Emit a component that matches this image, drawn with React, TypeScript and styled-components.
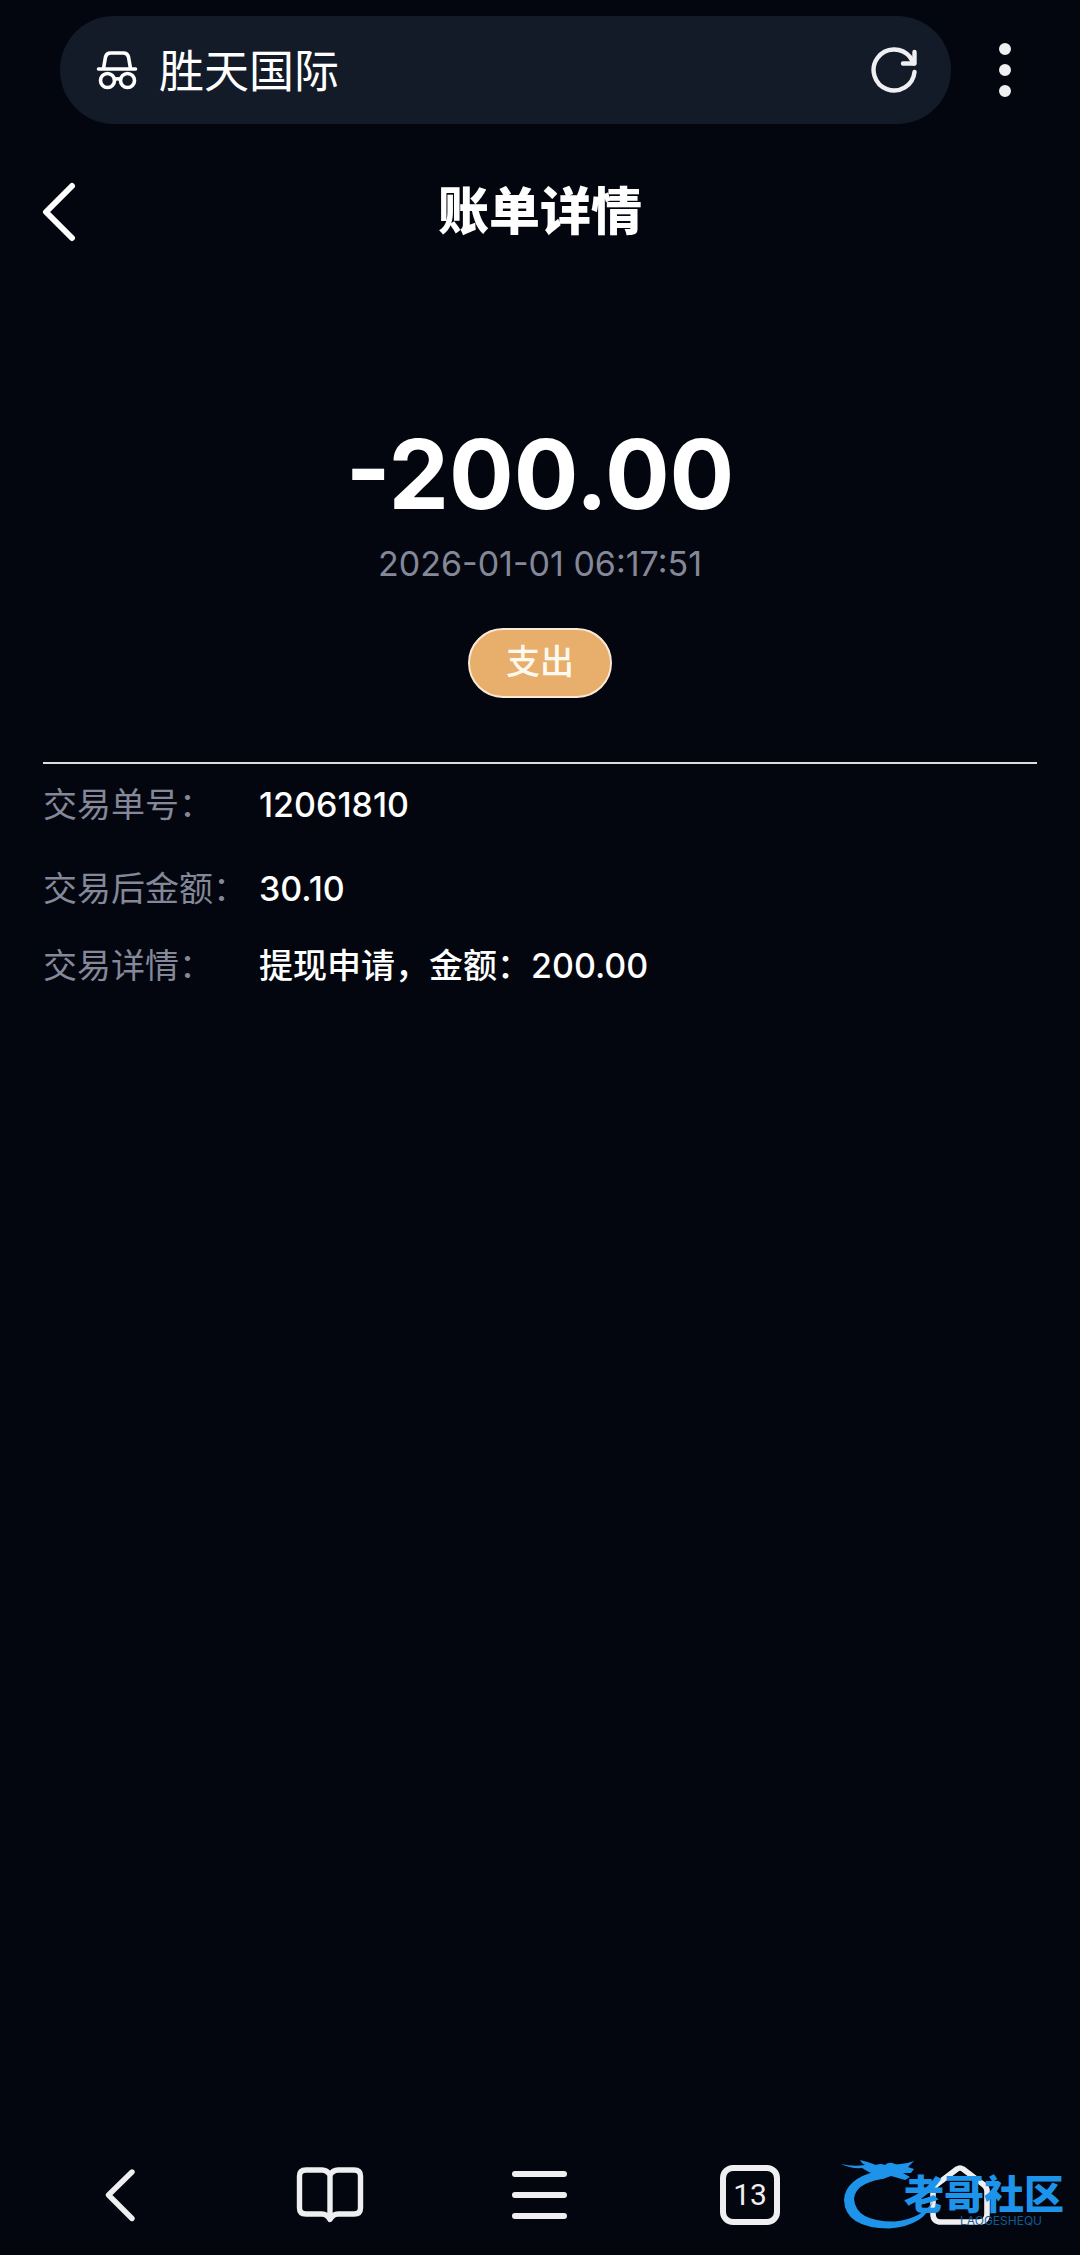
import React from "react";
import styled, { createGlobalStyle } from "styled-components";

const ui = `Inter, "Noto Sans CJK SC", sans-serif`;

const GlobalStyle = createGlobalStyle`
  *, *::before, *::after { box-sizing: border-box; }
  body { margin: 0; background: #03060e; color: #fff; font-family: ${ui}; }
  h1, p, dl, dt, dd { margin: 0; }
`;

const Screen = styled.div`
  display: flex;
  flex-direction: column;
  min-height: 100vh;
  background: #03060e;
`;

const IconButton = styled.button`
  display: flex;
  align-items: center;
  justify-content: center;
  padding: 0;
  border: 0;
  background: none;
  color: ${(p: { $tone?: string }) => p.$tone ?? "#efeff1"};
  cursor: pointer;
`;

const Glyph = styled.svg`
  display: block;
  fill: none;
  stroke: currentColor;
  stroke-linecap: round;
  stroke-linejoin: round;
`;

const BrowserBar = styled.header`
  display: flex;
  align-items: center;
  padding: 16px 45px 0 60px;
`;

const AddressBar = styled.div`
  display: flex;
  flex: 1;
  align-items: center;
  height: 108px;
  padding: 0 32px 0 36px;
  border-radius: 54px;
  background: #131b28;
`;

const SiteName = styled.span`
  flex: 1;
  padding: 4px 0 0 21px;
  font-size: 45px;
  line-height: 60px;
`;

const MenuSlot = styled.div`
  display: flex;
  justify-content: flex-end;
  width: 84px;
`;

const PageHeader = styled.div`
  display: grid;
  grid-template-columns: 120px 1fr 120px;
  align-items: center;
  height: 132px;
  margin-top: 22px;
  padding: 0 40px;
`;

const Title = styled.h1`
  font-size: 51px;
  line-height: 72px;
  font-weight: 900;
  text-align: center;
`;

const BackSlot = styled.div`
  display: flex;
`;

const Summary = styled.section`
  display: flex;
  flex-direction: column;
  align-items: center;
  margin: 0 43px;
  padding: 136px 0 64px;
  border-bottom: 2px solid #dcdde2;
`;

const Amount = styled.p`
  font-size: 96px;
  line-height: 120px;
  font-weight: 700;
`;

const Time = styled.p`
  margin-top: 10px;
  color: #848899;
  font-size: 34px;
  line-height: 40px;
`;

const Badge = styled.span`
  display: flex;
  align-items: center;
  justify-content: center;
  width: 144px;
  height: 70px;
  margin-top: 44px;
  padding-bottom: 2px;
  border: 2px solid #fbe9d6;
  border-radius: 35px;
  background: #e8ae6c;
  color: #fffaf0;
  font-size: 34px;
  line-height: 40px;
  font-weight: 500;
`;

const Details = styled.dl`
  flex: 1;
  margin: 0 43px;
`;

const Row = styled.div`
  display: flex;
  align-items: center;
  min-height: ${(p: { $tall?: boolean }) => (p.$tall ? "84px" : "70px")};
  padding-bottom: 2px;
  font-size: 34px;
  line-height: 48px;
`;

const Label = styled.dt`
  width: 216px;
  color: #848899;
`;

const Value = styled.dd`
  flex: 1;
  font-weight: 500;
`;

const NavBar = styled.nav`
  position: relative;
  display: grid;
  grid-template-columns: repeat(5, 1fr);
  height: 120px;
  padding: 0 15px;
`;

const TabCount = styled.span`
  display: flex;
  align-items: center;
  justify-content: center;
  width: 60px;
  height: 60px;
  border: 6px solid #efeff1;
  border-radius: 13px;
  font: 400 30px/36px Roboto, sans-serif;
`;

const Watermark = styled.div`
  position: absolute;
  right: 14px;
  bottom: 20px;
  width: 225px;
  height: 80px;
  color: #1e93ea;
  pointer-events: none;
`;

const Dragon = styled.svg`
  position: absolute;
  inset: 0;
`;

const MarkText = styled.div`
  position: absolute;
  right: 2px;
  top: 22px;
  font-size: 40px;
  line-height: 36px;
  font-weight: 900;
`;

const MarkSub = styled.div`
  position: absolute;
  right: 24px;
  top: 60px;
  color: #125b92;
  font: 400 12px/12px Inter, sans-serif;
`;

const rows = [
  { label: "交易单号：", value: "12061810", tall: true },
  { label: "交易后金额：", value: "30.10", tall: true },
  { label: "交易详情：", value: "提现申请，金额：200.00", tall: false },
];

export default function App() {
  return (
    <Screen>
      <GlobalStyle />
      <BrowserBar>
        <AddressBar>
          <Glyph width="42" height="42" viewBox="0 0 42 42" strokeWidth="3.6" aria-hidden="true">
            <path d="M2.500 20H39.500M7.500 19.500L9.500 8Q10.500 4 14.500 4H27.500Q31.500 4 32.500 8L34.500 19.500" />
            <circle cx="11.500" cy="31.500" r="7" />
            <circle cx="31.500" cy="31.500" r="7" />
            <path d="M18.500 30.500Q21.500 29 24.500 30.500" />
          </Glyph>
          <SiteName>胜天国际</SiteName>
          <IconButton type="button" aria-label="刷新">
            <Glyph width="50" height="50" viewBox="0 0 50 50" strokeWidth="4.400">
              <path d="M45.500 27A20.500 20.500 0 1 1 41 12L45 18.500" />
              <path d="M45.500 7V18.500H34" />
            </Glyph>
          </IconButton>
        </AddressBar>
        <MenuSlot>
          <IconButton type="button" aria-label="更多">
            <Glyph width="60" height="60" viewBox="0 0 60 60" strokeWidth="12">
              <path d="M30 9h0M30 30h0M30 51h0" />
            </Glyph>
          </IconButton>
        </MenuSlot>
      </BrowserBar>

      <PageHeader>
        <BackSlot>
          <IconButton type="button" aria-label="返回" $tone="#fff">
            <Glyph width="38" height="60" viewBox="0 0 38 60" strokeWidth="6">
              <path d="M32 4L6 30L32 56" />
            </Glyph>
          </IconButton>
        </BackSlot>
        <Title>账单详情</Title>
      </PageHeader>

      <Summary>
        <Amount>-200.00</Amount>
        <Time>2026-01-01 06:17:51</Time>
        <Badge>支出</Badge>
      </Summary>

      <Details>
        {rows.map((r) => (
          <Row key={r.label} $tall={r.tall}>
            <Label>{r.label}</Label>
            <Value>{r.value}</Value>
          </Row>
        ))}
      </Details>

      <NavBar>
        <IconButton type="button" aria-label="后退">
          <Glyph width="60" height="60" viewBox="0 0 60 60" strokeWidth="5.400">
            <path d="M42 7L18.500 30L42 53.500" />
          </Glyph>
        </IconButton>
        <IconButton type="button" aria-label="书签">
          <Glyph width="70" height="60" viewBox="0 0 70 60" strokeWidth="5.400">
            <path d="M35 10V54M35 10Q32 5 27 5H11Q4.500 5 4.500 11V43Q4.500 49 11 49H27Q32 49 35 54.500Q38 49 43 49H59Q65.500 49 65.500 43V11Q65.500 5 59 5H43Q38 5 35 10" />
          </Glyph>
        </IconButton>
        <IconButton type="button" aria-label="菜单">
          <Glyph width="60" height="60" viewBox="0 0 60 60" strokeWidth="6">
            <path d="M5 9H54M5 30H54M5 51H54" />
          </Glyph>
        </IconButton>
        <IconButton type="button" aria-label="标签页">
          <TabCount>13</TabCount>
        </IconButton>
        <IconButton type="button" aria-label="主页">
          <Glyph width="60" height="60" viewBox="0 0 60 60" strokeWidth="5.600">
            <path d="M27 4Q30 2 33 4L54 20Q57 22.500 57 26V49Q57 57 49 57H11Q3 57 3 49V26Q3 22.500 6 20Z" />
          </Glyph>
        </IconButton>
        <Watermark>
          <Dragon width="225" height="80" viewBox="0 0 225 80" fill="currentColor" aria-hidden="true">
            <path d="M36 16Q4 24 3 45Q4 73 48 73.500Q84 71 92 46Q82 63 54 66.500Q15 67 13 44Q14 29 40 24Z" />
            <path d="M0 9Q12 12 24 10Q20 8 19 5Q28 7 35 10Q39 8 44 10Q48 6 54 9Q63 10 73 6L67 12L73 14L70 18L62 18L69 22L64 25L50 21L42 24L30 25L36 20Q28 18 21 13Q10 14 0 9Z" />
          </Dragon>
          <MarkText>老哥社区</MarkText>
          <MarkSub>LAOGESHEQU</MarkSub>
        </Watermark>
      </NavBar>
    </Screen>
  );
}
